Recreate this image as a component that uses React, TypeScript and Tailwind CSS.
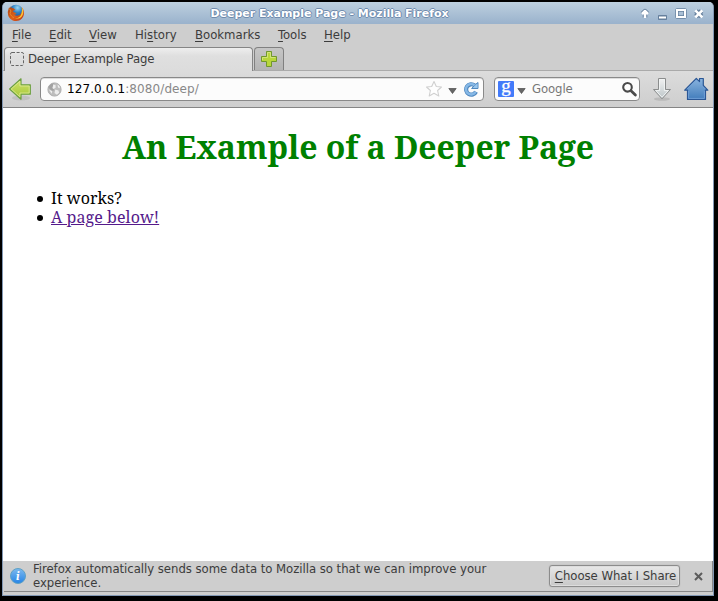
import React from "react";

const ui = "font-['DejaVu_Sans_Condensed','DejaVu_Sans',sans-serif] [font-stretch:condensed]";

function MenuItem({ before = "", mark, after, width }: { before?: string; mark: string; after: string; width: string }) {
  return (
    <span className={`${width} shrink-0 whitespace-nowrap`}>
      {before}
      <span className="underline underline-offset-2">{mark}</span>
      {after}
    </span>
  );
}

function FirefoxLogo() {
  return (
    <svg width="18" height="18" viewBox="0 0 18 18" className="-mt-[1px] -ml-[1px] block shrink-0">
      <defs>
        <radialGradient id="globe" cx=".6" cy=".2" r=".8">
          <stop offset="0" stopColor="#9bd7f2" />
          <stop offset=".4" stopColor="#2f83c5" />
          <stop offset="1" stopColor="#143a78" />
        </radialGradient>
        <linearGradient id="fox" x1="0" y1="0" x2="1" y2="1">
          <stop offset="0" stopColor="#a94415" />
          <stop offset=".55" stopColor="#e0611a" />
          <stop offset="1" stopColor="#b83213" />
        </linearGradient>
      </defs>
      <circle cx="9" cy="8.3" r="7.5" fill="url(#globe)" />
      <path d="M2 3.5Q0 8 1.2 11.5C2.4 15 5.6 17 9 17c4.5 0 8-3.5 8-8 0-2.5-1-4.7-2.5-6 .9 2.3.8 5-.8 7.1-1.5 2-4.6 2.3-6.6.7L9.5 10 8 8.6 6.2 8l.2-1.5L8.5 6 6.5 4.3 4.8 4 3.8 2.2 3.4 4Z" fill="url(#fox)" />
      <path d="M14.7 3c2.4 3.5 1.9 7.9-.4 10-1.8 1.7-4.4 2-6.3 1.2 3.2.1 5.7-1.4 6.5-4.7.6-2.3.6-4.5.2-6.5Z" fill="#fbc535" />
      <path d="M2.4 4.6 4 7l-1 2.2c1 2.6 2.2 3.6 3.8 4.4" fill="none" stroke="#e98a2a" />
    </svg>
  );
}

function WindowButtons() {
  return (
    <svg width="72" height="16" viewBox="0 0 72 16" className="-mr-[1px] block shrink-0" strokeLinejoin="round">
      <g fill="none" stroke="#66809d">
        <path d="M9 12.5V7M6.3 8.8 9 6.2l2.7 2.6" strokeWidth="4.6" />
        <path d="M22.5 10.5h8v4h-8z" strokeWidth="1" fill="#66809d" />
        <path d="M41 5h8v7h-8z" strokeWidth="3.4" />
        <path d="m60 6 5.5 5.5m0-5.5L60 11.5" strokeWidth="5" />
      </g>
      <g fill="none" stroke="#fff">
        <path d="M9 13V7M6 9l3-3 3 3" strokeWidth="2.5" />
        <path d="M23 12.5h7" strokeWidth="2" />
        <path d="M41 5h8v7h-8z" strokeWidth="2" strokeLinejoin="miter" />
        <path d="m59.3 5.3 7 7m0-7-7 7" strokeWidth="2.6" />
      </g>
    </svg>
  );
}

function Caret() {
  return (
    <svg width="9" height="6" viewBox="0 0 9 6" className="block shrink-0">
      <path d="M.8.5h7.4L4.5 5.5z" fill="#666" stroke="#4c4c4c" strokeWidth=".7" />
    </svg>
  );
}

function BackIcon() {
  return (
    <svg width="26" height="26" viewBox="0 0 26 26" className="block shrink-0">
      <defs>
        <linearGradient id="green" x2="0" y2="1">
          <stop stopColor="#d0e36c" /><stop offset="1" stopColor="#a3c635" />
        </linearGradient>
      </defs>
      <ellipse cx="14" cy="22" rx="9" ry="2.5" fill="#777" opacity=".18" />
      <path d="M2.6 13 14 2.8v6h9.3v9.4H14v5Z" fill="url(#green)" stroke="#6ca042" strokeWidth="1.2" strokeLinejoin="round" />
      <path d="m4.2 13 8.7-7.8V10h9.3v7h-9.3v3.8Z" fill="none" stroke="#dfeb98" strokeWidth=".8" />
    </svg>
  );
}

function GlobeIcon() {
  return (
    <svg width="15" height="15" viewBox="0 0 15 15" className="block shrink-0">
      <circle cx="7.5" cy="7.5" r="6.6" fill="#bdbdbd" stroke="#b0b0b0" />
      <path d="M2 4 4 2l3-.7 1 1.4-1.7 1-1 2.5L7 7.3 6.3 9 3.8 8 1.4 5.6Z" fill="#a2a2a2" />
      <path d="M6.3 2.3 8.5 3l.2 2.4-2 1.7-1.2-1Z M8.3 7.5l3.2 1 .6 2.3-2.2 2L7.5 11Z" fill="#ededed" />
      <path d="m2 7.5 3.2 1.7-.6 2.6Z m8.5-4.9 1.8 1.5.7 2.2-2-.8Z" fill="#efefef" />
    </svg>
  );
}

function StarIcon() {
  return (
    <svg width="18" height="18" viewBox="0 0 18 18" className="block shrink-0">
      <path d="m9 1.5 2.3 5 5.2.5-3.9 3.5 1.2 5.5L9 13.2 4.2 16l1.2-5.5L1.5 7l5.2-.5Z" fill="#fefefe" stroke="#d0d0d0" strokeWidth="1.1" strokeLinejoin="round" />
    </svg>
  );
}

function ReloadIcon() {
  return (
    <svg width="16" height="16" viewBox="0 0 16 16" className="block shrink-0">
      <path d="M11.6 4.4A5.2 5.2 0 1 0 13 10.8" fill="none" stroke="#5088bf" strokeWidth="4.2" />
      <path d="M8.6 7.5H15v-6l-2.4 1.8Z" fill="#8bbce8" stroke="#5088bf" strokeLinejoin="round" />
      <path d="M11.6 4.4A5.2 5.2 0 1 0 12.6 10.8" fill="none" stroke="#86b8e6" strokeWidth="2.4" />
      <path d="M10 6.9h4.4V2.7Z" fill="#9ac7ee" />
    </svg>
  );
}

function SearchIcon() {
  return (
    <svg width="17" height="17" viewBox="0 0 17 17" className="block shrink-0">
      <circle cx="6.5" cy="6.3" r="4.3" fill="#fff" stroke="#4b4b4b" strokeWidth="2.1" />
      <path d="m10 9.8 4.4 4.2" stroke="#4b4b4b" strokeWidth="2.8" strokeLinecap="round" />
    </svg>
  );
}

function DownloadIcon() {
  return (
    <svg width="20" height="26" viewBox="0 0 20 26" className="block shrink-0">
      <defs><linearGradient id="grey" x2="0" y2="1"><stop stopColor="#f2f2f2" /><stop offset="1" stopColor="#bcc5c8" /></linearGradient></defs>
      <ellipse cx="10" cy="23" rx="8" ry="1.8" fill="#777" opacity=".25" />
      <path d="M6.5 2.5h7v11h5L10 22.8 1.5 13.5h5Z" fill="url(#grey)" stroke="#8b8d8d" strokeLinejoin="round" />
      <path d="M7.6 3.6h4.8v11h3.8L10 21.2l-6.2-6.6h3.8Z" fill="none" stroke="#f3f5f5" strokeWidth=".9" />
    </svg>
  );
}

function HomeIcon() {
  return (
    <svg width="26" height="26" viewBox="0 0 26 26" className="block shrink-0">
      <defs><linearGradient id="home" x2="0" y2="1"><stop stopColor="#8ab4de" /><stop offset="1" stopColor="#417cbb" /></linearGradient></defs>
      <path d="M1.7 14.2 13.3 2.5l3.2 3.2V2.5h3.8v7l4.5 4.7h-2.3v9.3H4.5v-9.3Z" fill="url(#home)" stroke="#2b5795" strokeWidth="1.2" strokeLinejoin="round" />
      <path d="m4 13.2 9.3-9.3 9.2 9.3M5.6 15v7.4h15.8V15" fill="none" stroke="#78a5da" strokeWidth=".8" />
    </svg>
  );
}

export default function App() {
  return (
    <div className={`${ui} h-[601px] w-[718px] overflow-hidden bg-black pl-[2px] pt-[2px] text-[12px] text-[#3c3c3c]`}>
      <div className="flex h-[594px] w-[712px] flex-col overflow-hidden rounded-t-[5px] border border-t-0 border-[#8298b4] bg-[#cecece]">
        <header className="flex h-[22px] shrink-0 items-center bg-linear-to-b from-[#bdd0df] to-[#9ab2cc] pl-[5px]">
          <FirefoxLogo />
          <h1 className="mr-[2px] w-[609px] shrink-0 pt-[2px] text-center font-['DejaVu_Sans',sans-serif] text-[11px] leading-[18px] font-bold tracking-[-0.02px] [font-stretch:normal] text-white [text-shadow:1px_0_#6f8bad,-1px_0_#6f8bad,0_1px_#6f8bad,0_-1px_#6f8bad]">Deeper Example Page - Mozilla Firefox</h1>
          <WindowButtons />
        </header>

        <nav className="flex h-[23px] shrink-0 items-start pl-[9px] text-[13px] leading-[21px]">
          <MenuItem mark="F" after="ile" width="w-[37px]" />
          <MenuItem mark="E" after="dit" width="w-[40px]" />
          <MenuItem mark="V" after="iew" width="w-[46px]" />
          <MenuItem before="Hi" mark="s" after="tory" width="w-[60px]" />
          <MenuItem mark="B" after="ookmarks" width="w-[83px]" />
          <MenuItem mark="T" after="ools" width="w-[46px]" />
          <MenuItem mark="H" after="elp" width="w-[40px]" />
        </nav>

        <div className="flex h-[24px] shrink-0 border-b border-[#aaa] pl-[1px]">
          <div className="flex h-[24px] w-[249px] shrink-0 items-center rounded-t-[4px] border border-b-0 border-[#858585] bg-linear-to-b from-[#eee] via-[#dfdfdf] via-35% to-[#dcdcdc] pl-[5px] text-[13px]">
            <svg width="14" height="14" className="mr-[4px] mb-[2px] block shrink-0"><rect x=".5" y=".5" width="13" height="13" rx="1.5" fill="none" stroke="#666" strokeDasharray="3 1.6" /></svg>
            <span className="pb-[2px] tracking-[-0.16px]">Deeper Example Page</span>
          </div>
          <div className="ml-[1px] flex h-[23px] w-[30px] items-center justify-center rounded-t-[4px] border border-b-0 border-[#808080] bg-linear-to-b from-[#c6c6c6] to-[#b4b4b4]">
            <svg width="18" height="18"><path d="M6.5 1.5h5v5h5v5h-5v5h-5v-5h-5v-5h5z" fill="#b8d63b" stroke="#71972d" strokeLinejoin="round" /><path d="M7.5 7.5v-5h3v5h5M2.5 10V7.5h5" fill="none" stroke="#d3e47a" /></svg>
          </div>
        </div>

        <div className="flex h-[37px] shrink-0 items-center border-b border-[#858585] bg-linear-to-b from-[#dcdcdc] to-[#cecece] pl-[4px] text-[13px]">
          <BackIcon />
          <div className="ml-[7px] flex h-[24px] w-[444px] shrink-0 items-center rounded-[4px] border border-[#898989] bg-[#fcfcfc] pl-[6px] shadow-[inset_0_1px_#ddd]">
            <GlobeIcon />
            <span className="ml-[5px] w-[358px] font-['DejaVu_Sans',sans-serif] text-[12px] tracking-[0.1px] [font-stretch:normal] text-[#888]"><span className="text-black">127.0.0.1</span>:8080/deep/</span>
            <StarIcon /><span className="mt-[3px] mr-[6px] ml-[5px]"><Caret /></span><ReloadIcon />
          </div>
          <div className="ml-[10px] flex h-[24px] w-[146px] shrink-0 items-center rounded-[4px] border border-[#898989] bg-[#fcfcfc] pl-[3px] shadow-[inset_0_1px_#ddd]">
            <svg width="16" height="16" viewBox="0 0 16 16" className="block shrink-0">
              <rect width="16" height="16" rx="1" fill="#427afa" />
              <text x="8" y="10.5" textAnchor="middle" fill="#fff" stroke="#fff" strokeWidth=".3" fontFamily="Liberation Serif" fontSize="19">g</text>
            </svg>
            <span className="mt-[3px] ml-[3px]"><Caret /></span>
            <span className="ml-[6px] w-[89px] tracking-[-0.1px] text-[#777]">Google</span>
            <SearchIcon />
          </div>
          <span className="ml-[12px]"><DownloadIcon /></span>
          <span className="ml-[11px]"><HomeIcon /></span>
        </div>

        <main className="h-[453px] shrink-0 bg-white font-['Droid_Serif','Noto_Serif','DejaVu_Serif_Condensed',serif] text-[16px] text-black">
          <h2 className="pt-[17px] text-center text-[32px] leading-[44px] font-bold tracking-[-0.07px] text-[#008000]">An Example of a Deeper Page</h2>
          <ul className="mt-[20px] leading-[19px]">
            {["It works?", "A page below!"].map((label, index) => (
              <li key={label} className="flex h-[19px] items-center pl-[34px]">
                <span className="mr-[8px] h-[6px] w-[6px] rounded-full bg-black" />
                <span className={index === 1 ? "tracking-[0.07px] text-[#551a8b] underline" : "tracking-[0.05px]"}>{label}</span>
              </li>
            ))}
          </ul>
        </main>

        <aside className="ml-[1px] flex h-[31px] shrink-0 items-center border-r border-b border-[#888] pl-[6px] text-[13px]">
          <svg width="16" height="16" className="block shrink-0">
            <defs><linearGradient id="info" x2="0" y2="1"><stop stopColor="#7db9ee" /><stop offset="1" stopColor="#2584e6" /></linearGradient></defs>
            <circle cx="8" cy="8" r="7.5" fill="url(#info)" stroke="#5da0c5" />
            <text x="8" y="12" textAnchor="middle" fill="white" fontFamily="DejaVu Serif" fontSize="11" fontWeight="bold" fontStyle="italic">i</text>
          </svg>
          <p className="ml-[7px] w-[516px] shrink-0 leading-[14px] tracking-[-0.04px]">Firefox automatically sends some data to Mozilla so that we can improve your<br />experience.</p>
          <button className="flex h-[22px] w-[131px] shrink-0 items-center justify-center rounded-[3px] border border-[#8c8c8c] bg-linear-to-b from-[#e8e8e8] to-[#c8c8c8] pl-[2px] tracking-[-0.04px] whitespace-nowrap shadow-[inset_0_0_0_1px_#ddd,0_0_1px_#999]"><span className="underline underline-offset-2">C</span>hoose What I Share</button>
          <svg width="9" height="9" className="ml-[14px]"><path d="m1 1 7 7m0-7-7 7" stroke="#5c5c5c" strokeWidth="2" /></svg>
        </aside>
      </div>
    </div>
  );
}
